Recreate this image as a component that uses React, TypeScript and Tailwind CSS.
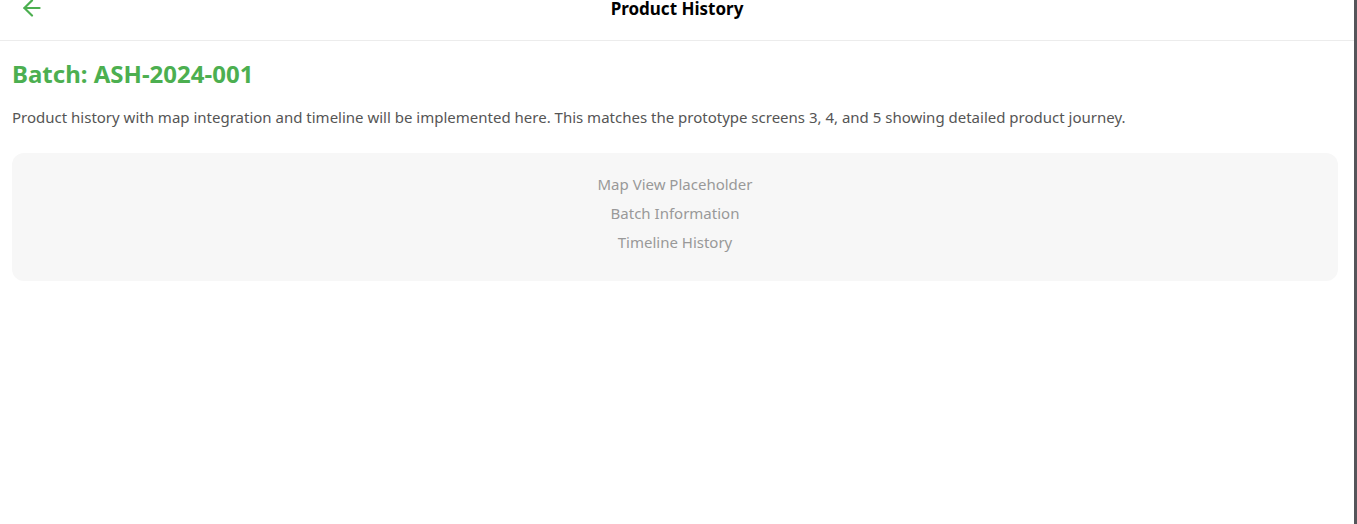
import React from 'react';
import { ArrowLeft } from 'lucide-react';

export default function App() {
  const sections = ['Map View Placeholder', 'Batch Information', 'Timeline History'];

  return (
    <div className="flex h-[524px] w-[1357px] overflow-hidden bg-white font-['Noto_Sans','Open_Sans',sans-serif]">
      <div className="flex-1">
        {/* Header (page is scrolled slightly) */}
        <div className="relative flex h-[41px] items-start justify-center border-b border-[#ececec]">
          <button className="absolute left-[19px] top-[-5px] text-[#4caf50]">
            <ArrowLeft size={26} strokeWidth={2} />
          </button>
          <h1 className="text-[17px] font-bold leading-[18px] text-black">Product History</h1>
        </div>

        <div className="px-3 pt-[18px]">
          <h2 className="text-[24px] font-bold leading-[30px] text-[#4caf50]">Batch: ASH-2024-001</h2>
          <p className="mt-[17px] text-[15px] leading-[22px] text-[#555]">
            Product history with map integration and timeline will be implemented here. This matches the prototype screens 3, 4, and 5 showing detailed product journey.
          </p>

          <div className="mt-[25px] mr-[4px] flex flex-col items-center gap-[7px] rounded-xl bg-[#f7f7f7] pt-[20px] pb-[28px]">
            {sections.map((s) => (
              <div key={s} className="text-[15px] leading-[22px] text-[#999]">
                {s}
              </div>
            ))}
          </div>
        </div>
      </div>
      <div className="w-[3px] bg-[#55555a]" />
    </div>
  );
}
